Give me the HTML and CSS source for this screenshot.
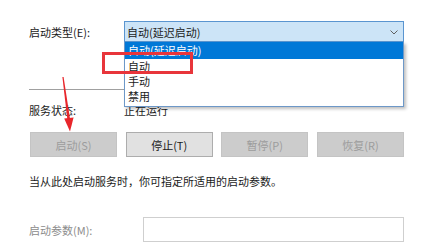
FILE: index.html
```html
<!DOCTYPE html>
<html lang="zh-CN">
<head>
<meta charset="utf-8">
<title>服务属性</title>
<link rel="stylesheet" href="styles.css">
</head>
<body>
<div class="page">
  <div class="row startup">
    <span class="label">启动类型(E):</span>
    <div class="combo">
      <span class="combo-text">自动(延迟启动)</span>
      <svg class="chev" width="8" height="5" viewBox="0 0 8 5"><path d="M0.5 0.5 L4 4 L7.5 0.5" fill="none" stroke="#606060" stroke-width="1"/></svg>
      <ul class="list">
        <li class="item selected">自动(延迟启动)</li>
        <li class="item">自动</li>
        <li class="item">手动</li>
        <li class="item">禁用</li>
      </ul>
    </div>
  </div>
  <div class="sep"></div>
  <div class="row status">
    <span class="label">服务状态:</span>
    <span class="value">正在运行</span>
  </div>
  <div class="buttons">
    <button class="btn disabled">启动(S)</button>
    <button class="btn">停止(T)</button>
    <button class="btn disabled">暂停(P)</button>
    <button class="btn disabled">恢复(R)</button>
  </div>
  <p class="desc">当从此处启动服务时，你可指定所适用的启动参数。</p>
  <div class="row params">
    <span class="label plabel">启动参数(M):</span>
    <div class="input"></div>
  </div>
  <div class="mark"></div>
  <svg class="arrow" width="80" height="140" viewBox="0 0 80 140">
    <polygon points="62.4,77 63.6,77 70.2,120 67.4,120" fill="#e8262b"/>
    <polygon points="64.2,118.5 73.6,117.5 70,131.5" fill="#e8262b"/>
  </svg>
</div>
</body>
</html>
```

FILE: styles.css
```css
* { box-sizing: border-box; }
html, body { margin: 0; padding: 0; background: #ffffff; }
body {
  width: 447px;
  height: 245px;
  overflow: hidden;
  font-family: "Noto Sans CJK SC", "Microsoft YaHei", sans-serif;
  font-size: 11px;
  color: #1a1a1a;
}
.page {
  position: relative;
  padding: 21px 0 0 29px;
  width: 447px;
  height: 245px;
}
.row { display: flex; align-items: center; }
.label { width: 95px; flex: none; line-height: 16px; }
.startup { height: 21px; }
.combo {
  position: relative;
  width: 280px;
  height: 21px;
  background: #cce4f7;
  border: 1px solid #5a95d0;
  display: flex;
  align-items: center;
  padding-left: 2px;
}
.combo-text { flex: 1; line-height: 16px; }
.chev { margin-right: 5px; margin-top: 1px; }
.list {
  position: absolute;
  left: -1px;
  top: 20px;
  width: 280px;
  height: 65px;
  margin: 0;
  padding: 0 0 2px 0;
  list-style: none;
  background: #ffffff;
  border: 1px solid #6d98c8;
  border-top: none;
  box-shadow: 2px 2px 3px rgba(0, 0, 0, 0.25);
  z-index: 2;
}
.item { height: 15px; line-height: 15px; padding-left: 3px; }
.item.selected { height: 17px; line-height: 17px; background: #0078d7; color: #ffffff; }
.sep {
  margin-top: 47px;
  width: 375px;
  height: 1px;
  background: #a0a0a0;
}
.status { margin-top: 12px; height: 16px; }
.value { line-height: 16px; }
.buttons {
  margin: 14px 0 0 1px;
  width: 374px;
  display: flex;
  justify-content: space-between;
}
.btn {
  width: 87px;
  height: 25px;
  border: 1px solid #adadad;
  background: #e1e1e1;
  font-family: inherit;
  font-size: 11px;
  color: #1a1a1a;
  padding: 0;
}
.btn.disabled { background: #cccccc; border-color: #c4c4c4; color: #9c9c9c; }
.desc { margin: 16px 0 0 0; line-height: 16px; }
.params { margin-top: 28px; height: 25px; }
.plabel { width: 114px; color: #8c8c8c; }
.input {
  width: 261px;
  height: 25px;
  border: 1px solid #cfcfcf;
  background: #ffffff;
}
.mark {
  position: absolute;
  left: 102px;
  top: 52px;
  width: 91px;
  height: 22px;
  border: 3px solid #e8353b;
  z-index: 3;
}
.arrow {
  position: absolute;
  left: 0;
  top: 0;
  z-index: 4;
}
```
